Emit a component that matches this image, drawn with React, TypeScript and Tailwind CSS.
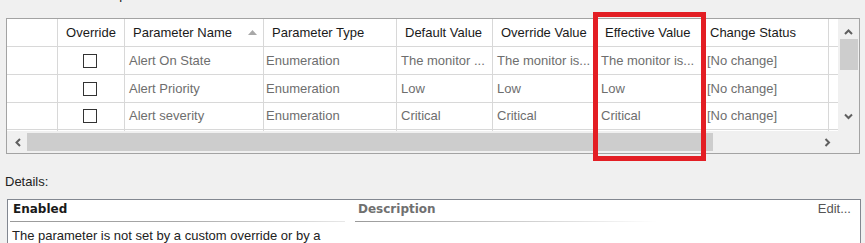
import React from "react";

type Row = {
  name: string;
  type: string;
  def: string;
  over: string;
  eff: string;
  status: string;
};

const rows: Row[] = [
  { name: "Alert On State", type: "Enumeration", def: "The monitor ...", over: "The monitor is...", eff: "The monitor is...", status: "[No change]" },
  { name: "Alert Priority", type: "Enumeration", def: "Low", over: "Low", eff: "Low", status: "[No change]" },
  { name: "Alert severity", type: "Enumeration", def: "Critical", over: "Critical", eff: "Critical", status: "[No change]" },
];

function Chevron({ dir }: { dir: "up" | "down" | "left" | "right" }) {
  const d =
    dir === "up"
      ? "M1 5 L4.5 1.5 L8 5"
      : dir === "down"
        ? "M1 1.5 L4.5 5 L8 1.5"
        : dir === "left"
          ? "M5 1 L1.5 4.5 L5 8"
          : "M1.5 1 L5 4.5 L1.5 8";
  const size = dir === "up" || dir === "down" ? { w: 9, h: 7 } : { w: 7, h: 9 };
  return (
    <svg width={size.w} height={size.h} viewBox={`0 0 ${size.w} ${size.h}`}>
      <path d={d} fill="none" stroke="#5f5f5f" strokeWidth="2" />
    </svg>
  );
}

export default function App() {
  const cell = "flex h-full shrink-0 items-center border-r border-[#d8d8d8] overflow-hidden whitespace-nowrap";
  return (
    <div className="relative h-[243px] w-[865px] overflow-hidden bg-[#f0f0f0] font-['Liberation_Sans',Arial,sans-serif] text-[13px] text-[#1a1a1a]">
      {/* label above, cut off by the crop */}
      <div className="h-[18px] overflow-hidden pl-[5px]">
        <div className="mt-[-13px] leading-[15px]">Override-controlled parameters:</div>
      </div>

      {/* grid */}
      <div className="ml-[6px] grid h-[136px] w-[854px] grid-cols-[831px_21px] grid-rows-[112px_22px] border border-[#a3a3a3] bg-white">
        <div className="overflow-hidden">
          <div className="flex h-[28px] border-b border-[#d8d8d8]">
            <div className={`${cell} w-[51px]`} />
            <div className={`${cell} w-[67px] justify-center`}>Override</div>
            <div className={`${cell} w-[139px] pl-[8px]`}>
              <span>Parameter Name</span>
              <svg className="ml-[16px]" width="9" height="5" viewBox="0 0 9 5">
                <path d="M0 5 L4.5 0 L9 5 Z" fill="#a8a8a8" />
              </svg>
            </div>
            <div className={`${cell} w-[133px] pl-[8px]`}>Parameter Type</div>
            <div className={`${cell} w-[96px] pl-[8px]`}>Default Value</div>
            <div className={`${cell} w-[104px] pl-[8px]`}>Override Value</div>
            <div className={`${cell} w-[105px] pl-[8px]`}>Effective Value</div>
            <div className={`${cell} w-[127px] pl-[8px]`}>Change Status</div>
          </div>
          {rows.concat([{ name: "", type: "", def: "", over: "", eff: "", status: "" }]).map((r, i) => (
            <div
              key={i}
              className={`flex border-b border-[#d8d8d8] text-[#6e6e6e] ${i === 2 ? "h-[27px]" : "h-[28px]"}`}
            >
              <div className={`${cell} w-[51px]`} />
              <div className={`${cell} w-[67px] justify-center`}>
                {r.name && <div className="ml-[-3px] h-[14px] w-[14px] border border-[#333] bg-white" />}
              </div>
              <div className={`${cell} w-[139px] pl-[4px]`}>{r.name}</div>
              <div className={`${cell} w-[133px] pl-[2px]`}>{r.type}</div>
              <div className={`${cell} w-[96px] pl-[4px]`}>{r.def}</div>
              <div className={`${cell} w-[104px] pl-[4px]`}>{r.over}</div>
              <div className={`${cell} w-[105px] pl-[4px]`}>{r.eff}</div>
              <div className={`${cell} w-[127px] pl-[5px]`}>{r.status}</div>
            </div>
          ))}
        </div>

        {/* vertical scrollbar */}
        <div className="flex flex-col items-center bg-[#f0f0f0]">
          <div className="flex h-[20px] items-end justify-center pb-[3px]">
            <Chevron dir="up" />
          </div>
          <div className="h-[31px] w-[18px] bg-[#cdcdcd]" />
          <div className="flex-1" />
          <div className="flex h-[20px] items-start justify-center pt-[2px]">
            <Chevron dir="down" />
          </div>
        </div>

        {/* horizontal scrollbar */}
        <div className="flex items-center bg-[#f0f0f0]">
          <div className="flex w-[20px] justify-center pl-[2px]">
            <Chevron dir="left" />
          </div>
          <div className="h-[18px] w-[686px] bg-[#cdcdcd]" />
          <div className="flex-1" />
          <div className="flex w-[22px] justify-center">
            <Chevron dir="right" />
          </div>
        </div>
        <div className="bg-[#f0f0f0]" />
      </div>

      {/* details */}
      <div className="mt-[19px] flex h-[18px] items-center pl-[5px] text-[#222]">Details:</div>
      <div className="ml-[7px] mt-[8px] h-[60px] w-[854px] border border-[#828790] bg-white">
        <div className="flex pt-[1px]">
          <div className="ml-[2px] w-[335px]">
            <div className="h-[16px] pl-[3px] font-['DejaVu_Sans',Verdana,sans-serif] text-[12px] font-bold leading-[16px] text-[#1a1a1a]">
              Enabled
            </div>
            <div className="mt-[4px] h-px bg-gradient-to-r from-[#9a9a9a] via-[#a8a8a8] to-[#e8e8e8]" />
          </div>
          <div className="ml-[10px] w-[302px]">
            <div className="h-[16px] pl-[3px] font-['DejaVu_Sans',Verdana,sans-serif] text-[12px] font-bold leading-[16px] text-[#707070]">
              Description
            </div>
            <div className="mt-[4px] h-px bg-gradient-to-r from-[#9a9a9a] via-[#c8c8c8] to-transparent" />
          </div>
          <div className="ml-auto mr-[9px] h-[16px] leading-[16px] text-[#555]">Edit...</div>
        </div>
        <div className="mt-[6px] pl-[4px] leading-[15px] text-[#222]">
          The parameter is not set by a custom override or by a
        </div>
      </div>

      {/* annotation */}
      <div className="absolute left-[593px] top-[12px] h-[149px] w-[113px] border-[5px] border-[#e31e24]" />
    </div>
  );
}
